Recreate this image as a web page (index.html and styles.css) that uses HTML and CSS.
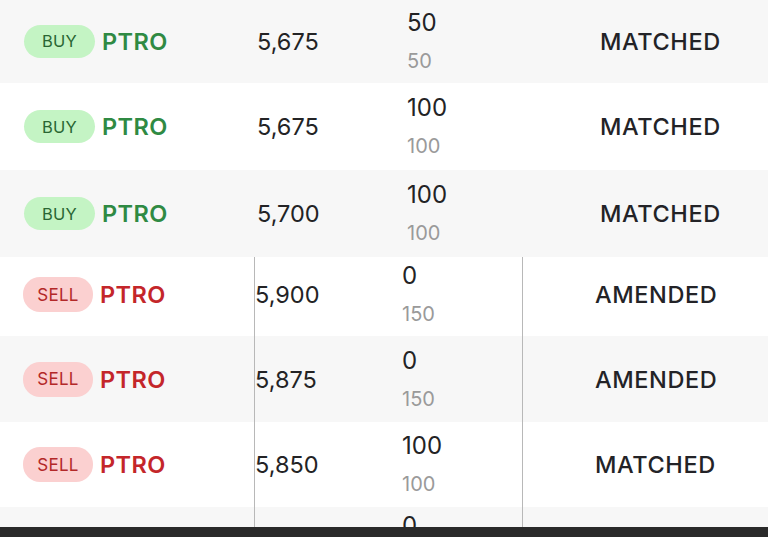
FILE: index.html
```html
<!DOCTYPE html>
<html>
<head>
<meta charset="utf-8">
<link rel="stylesheet" href="styles.css">
</head>
<body>
<div class="screen">
  <div class="list">
    <div class="row alt h83 top">
      <div class="side"><span class="pill buy">BUY</span><span class="sym buy">PTRO</span></div>
      <div class="mid"><span class="price">5,675</span><span class="qty"><span class="q1">50</span><span class="q2">50</span></span></div>
      <div class="stat">MATCHED</div>
    </div>
    <div class="row h87 top">
      <div class="side"><span class="pill buy">BUY</span><span class="sym buy">PTRO</span></div>
      <div class="mid"><span class="price">5,675</span><span class="qty"><span class="q1">100</span><span class="q2">100</span></span></div>
      <div class="stat">MATCHED</div>
    </div>
    <div class="row alt h87 top">
      <div class="side"><span class="pill buy">BUY</span><span class="sym buy">PTRO</span></div>
      <div class="mid"><span class="price">5,700</span><span class="qty"><span class="q1">100</span><span class="q2">100</span></span></div>
      <div class="stat">MATCHED</div>
    </div>
    <div class="row h79 lined">
      <div class="side"><span class="pill sell">SELL</span><span class="sym sell">PTRO</span></div>
      <div class="mid"><span class="price">5,900</span><span class="qty"><span class="q1">0</span><span class="q2">150</span></span></div>
      <div class="stat">AMENDED</div>
    </div>
    <div class="row alt h86 lined">
      <div class="side"><span class="pill sell">SELL</span><span class="sym sell">PTRO</span></div>
      <div class="mid"><span class="price">5,875</span><span class="qty"><span class="q1">0</span><span class="q2">150</span></span></div>
      <div class="stat">AMENDED</div>
    </div>
    <div class="row h85 lined">
      <div class="side"><span class="pill sell">SELL</span><span class="sym sell">PTRO</span></div>
      <div class="mid"><span class="price">5,850</span><span class="qty"><span class="q1">100</span><span class="q2">100</span></span></div>
      <div class="stat">MATCHED</div>
    </div>
    <div class="row alt h86 lined last">
      <div class="side"><span class="pill sell">SELL</span><span class="sym sell">PTRO</span></div>
      <div class="mid"><span class="price">5,825</span><span class="qty"><span class="q1">0</span><span class="q2">100</span></span></div>
      <div class="stat">AMENDED</div>
    </div>
  </div>
  <div class="navbar"></div>
</div>
</body>
</html>
```

FILE: styles.css
```css
* { box-sizing: border-box; }
html, body { margin: 0; padding: 0; }
body {
  width: 768px;
  height: 537px;
  overflow: hidden;
  background: #ffffff;
  font-family: Inter, "Noto Sans", sans-serif;
  color: #1f1f22;
}
.screen {
  display: flex;
  flex-direction: column;
  height: 537px;
}
.list {
  height: 527px;
  overflow: hidden;
  display: flex;
  flex-direction: column;
}
.row {
  flex: none;
  display: grid;
  grid-template-columns: 254px 269px 1fr;
  background: #ffffff;
}
.row.alt { background: #f7f7f7; }
.h83 { height: 83px; padding-bottom: 1px; }
.h87 { height: 87px; }
.h86 { height: 86px; }
.h85 { height: 85px; }
.h79 { height: 79px; }
.h79 .side, .h79 .stat, .h79 .price { padding-bottom: 9px; }
.h79 .qty { margin-top: 0; margin-bottom: 7px; }

.side {
  display: flex;
  align-items: center;
  padding-left: 24px;
  gap: 7px;
}
.lined .side { padding-left: 23px; }
.pill {
  display: inline-flex;
  align-items: center;
  justify-content: center;
  height: 33px;
  border-radius: 17px;
  font-size: 16.5px;
  letter-spacing: 0.3px;
}
.pill.buy {
  width: 71px;
  background: #c4f4c4;
  color: #2a6633;
}
.pill.sell {
  width: 70px;
  height: 35px;
  background: #fbd0d0;
  color: #b32828;
  font-size: 17px;
}
.sym {
  font-size: 23.5px;
  font-weight: 600;
  letter-spacing: 0.4px;
}
.sym.buy { color: #2f8a43; }
.sym.sell { color: #c4262a; }

.mid {
  display: flex;
  align-items: center;
}
.lined .mid {
  border-left: 1px solid #b8b8b8;
  border-right: 1px solid #b8b8b8;
}
.price {
  width: 153px;
  padding-left: 3px;
  font-size: 23.5px;
  color: #232325;
}
.lined .price { width: 147px; padding-left: 0; }
.qty {
  display: flex;
  flex-direction: column;
  margin-top: 2px;
}
.q1 {
  font-size: 24px;
  line-height: 38px;
  color: #232325;
}
.q2 {
  font-size: 20px;
  line-height: 39px;
  color: #9a9a9a;
}
.last .qty { align-self: flex-start; margin-top: 0; }

.stat {
  display: flex;
  align-items: center;
  padding-left: 77px;
  font-size: 23.5px;
  font-weight: 500;
  letter-spacing: 0.6px;
  color: #232327;
}
.lined .stat { padding-left: 72px; }

.navbar {
  height: 10px;
  background: #2a2a2a;
}
```
